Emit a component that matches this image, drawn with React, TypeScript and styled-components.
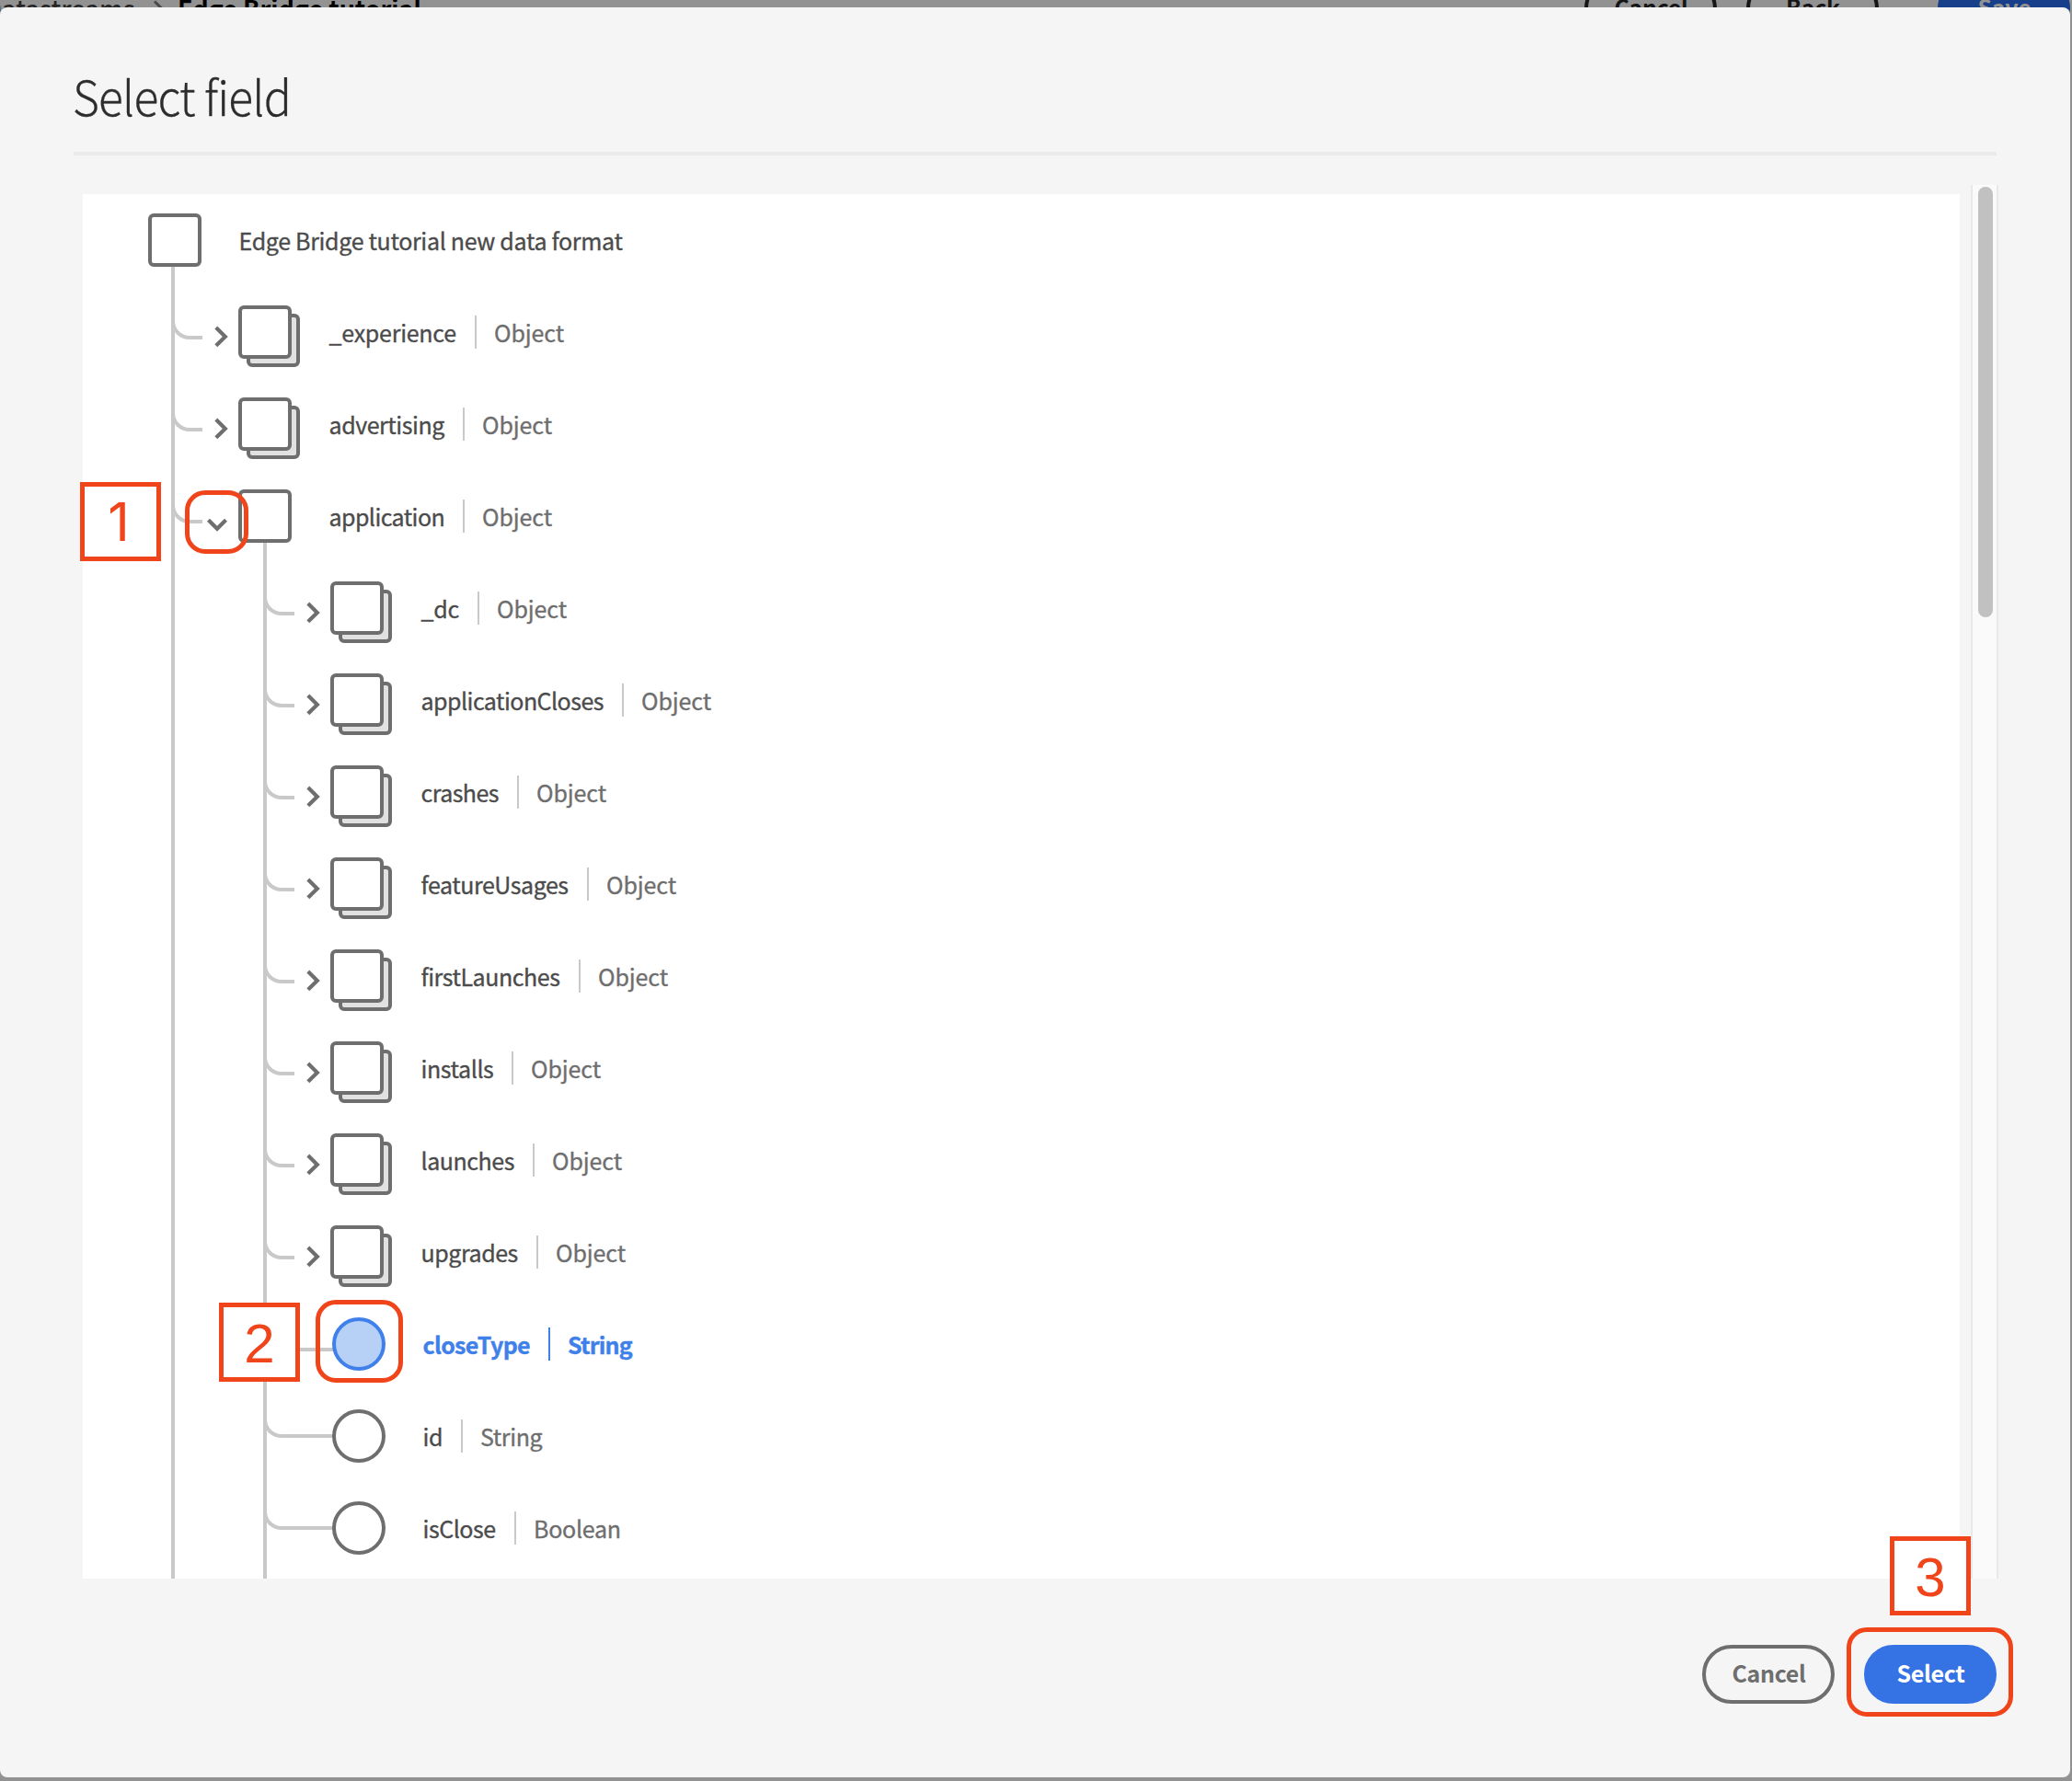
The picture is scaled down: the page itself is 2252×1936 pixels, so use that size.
import React from "react";
import styled, { createGlobalStyle, css } from "styled-components";

const GUIDE = "#c9c9c9";
const INK = "#6e6e6e";
const BLUE = "#4080ea";
const MARK = "#f0441b";

const GlobalStyle = createGlobalStyle`
  * { box-sizing: border-box; }
  body {
    margin: 0;
    overflow: hidden;
    font-family: "Noto Sans CJK JP", "Noto Sans", sans-serif;
    font-size: 25px;
    color: #4b4b4b;
  }
`;

const Page = styled.div`
  position: relative;
  width: 2252px;
  height: 1936px;
  overflow: hidden;
  background: #929292;
`;

const TopBar = styled.header`
  display: flex;
  align-items: center;
  justify-content: space-between;
  height: 64px;
  margin-top: -23px;
  padding-right: 2px;
`;

const Crumbs = styled.nav`
  display: flex;
  align-items: center;
  margin-left: -17px;
  font-size: 27px;
  line-height: 40px;
  color: #222;
`;

const Crumb = styled.span<{ $current?: boolean }>`
  font-weight: ${(p) => (p.$current ? 700 : 500)};
  color: ${(p) => (p.$current ? "#000" : "#262626")};
  letter-spacing: ${(p) => (p.$current ? 0 : 0.15)}px;
  width: ${(p) => (p.$current ? "auto" : "181px")};
`;

const CrumbArrow = styled.svg`
  width: 28px;
  height: 24px;
  margin-right: 1px;
`;

const TopActions = styled.div`
  display: flex;
  gap: 32px;
`;

const Button = styled.button<{ $tone: "outline" | "accent" | "dimOutline" | "dimAccent" }>`
  width: 144px;
  height: 64px;
  padding: 0 0 4px 1px;
  border-radius: 32px;
  border: 4px solid ${INK};
  background: transparent;
  color: ${INK};
  font: 700 25px/36px "Noto Sans CJK JP", sans-serif;
  letter-spacing: -0.3px;
  ${(p) =>
    p.$tone === "accent" &&
    css`
      border-color: #3573e5;
      background: #3573e5;
      color: #fff;
    `}
  ${(p) =>
    p.$tone === "dimOutline" &&
    css`
      border-color: #161616;
      color: #161616;
    `}
  ${(p) =>
    p.$tone === "dimAccent" &&
    css`
      margin-left: 32px;
      border-color: #173f8a;
      background: #173f8a;
      color: #929292;
    `}
`;

const Dialog = styled.section`
  position: absolute;
  top: 8px;
  left: 0;
  width: 2250px;
  height: 1924px;
  padding: 64px 78px 0 80px;
  border-radius: 8px;
  background: #f5f5f5;
`;

const Title = styled.h1`
  margin: 0 0 0 -1px;
  font-size: 52px;
  font-weight: 300;
  line-height: 64px;
  letter-spacing: -0.8px;
  color: #2c2c2c;
  -webkit-text-stroke: 0.3px;
  width: max-content;
  transform: scaleX(0.957);
  transform-origin: left;
`;

const Divider = styled.hr`
  width: 2090px;
  height: 4px;
  margin: 29px 0 32px;
  border: 0;
  background: #eaeaea;
`;

const Body = styled.div`
  display: flex;
  height: 1515px;
`;

const Panel = styled.div`
  flex: 1;
  margin: 10px 12px 0 10px;
  padding-left: 71px;
  overflow: hidden;
  background: #fff;
`;

const ScrollTrack = styled.div`
  width: 30px;
  padding: 2px 0 0 6px;
  border: solid #e8e8e8;
  border-width: 0 2px;
  background: #fafafa;
`;

const ScrollThumb = styled.div`
  width: 16px;
  height: 468px;
  border-radius: 8px;
  background: #c1c1c1;
`;

const Footer = styled.footer`
  display: flex;
  justify-content: flex-end;
  gap: 32px;
  margin-top: 72px;
  padding-right: 2px;
`;

const Branches = styled.div<{ $root?: boolean }>`
  margin-left: ${(p) => (p.$root ? 25 : 96)}px;
  padding-bottom: ${(p) => (p.$root ? 0 : 60)}px;
  border-left: 4px solid ${GUIDE};
`;

const Row = styled.div<{ $root?: boolean }>`
  display: flex;
  height: ${(p) => (p.$root ? 79 : 100)}px;
  padding-top: ${(p) => (p.$root ? 21 : 42)}px;
`;

const Elbow = styled.span<{ $leaf?: boolean; $raised?: boolean }>`
  flex: none;
  width: ${(p) => (p.$leaf ? 76 : 34)}px;
  height: 24px;
  margin: ${(p) => (p.$raised ? 7 : 13)}px ${(p) => (p.$leaf ? -1 : 0)}px 0 -4px;
  border: solid ${GUIDE};
  border-width: 0 0 4px 4px;
  border-bottom-left-radius: 20px;
`;

const Arrow = styled.svg`
  flex: none;
  width: 39px;
  height: 58px;
  fill: none;
  stroke: ${INK};
  stroke-width: 4.2;
`;

const IconCell = styled.span`
  position: relative;
  flex: none;
  width: 98px;
  height: 58px;
`;

const Square = styled.span<{ $behind?: boolean }>`
  position: absolute;
  top: ${(p) => (p.$behind ? 9 : 0)}px;
  left: ${(p) => (p.$behind ? 9 : 0)}px;
  width: 58px;
  height: 58px;
  border: 4px solid ${INK};
  border-radius: 6px;
  background: ${(p) => (p.$behind ? "#e1e1e1" : "#fff")};
`;

const Circle = styled.span<{ $on?: boolean }>`
  display: block;
  width: 58px;
  height: 58px;
  border: 4px solid ${(p) => (p.$on ? BLUE : INK)};
  border-radius: 50%;
  background: ${(p) => (p.$on ? "#b7d0f6" : "#fff")};
`;

const Caption = styled.span<{ $on?: boolean }>`
  display: flex;
  height: 36px;
  margin-top: 11px;
  line-height: 36px;
  white-space: nowrap;
  -webkit-text-stroke: 0.35px;
  ${(p) =>
    p.$on &&
    css`
      font-weight: 700;
      color: ${BLUE};
    `}
`;

const Name = styled.span<{ $width?: number; $track: number }>`
  width: ${(p) => (p.$width ? `${p.$width}px` : "auto")};
  margin-right: 20px;
  padding-left: 0.5px;
  letter-spacing: ${(p) => p.$track}px;
`;

const Kind = styled.span<{ $on?: boolean; $track: number }>`
  padding-left: 19px;
  border-left: 2px solid ${(p) => (p.$on ? BLUE : GUIDE)};
  color: ${(p) => (p.$on ? BLUE : INK)};
  letter-spacing: ${(p) => p.$track}px;
`;

const StepBox = styled.div<{ $x: number; $y: number; $narrow?: boolean }>`
  position: absolute;
  left: ${(p) => p.$x}px;
  top: ${(p) => p.$y}px;
  width: 88px;
  height: 86px;
  padding: ${(p) => (p.$narrow ? "0 4px 0 0" : "2px 0 0")};
  border: 5px solid ${MARK};
  background: #fff;
  color: ${MARK};
  font: 60px/76px "Liberation Sans", Arial, sans-serif;
  text-align: center;
  ${(p) =>
    p.$narrow &&
    css`
      font-family: Inter, sans-serif;
      font-size: 58px;
    `}
`;

const Ring = styled.div<{ $x: number; $y: number; $w: number; $h: number }>`
  position: absolute;
  left: ${(p) => p.$x}px;
  top: ${(p) => p.$y}px;
  width: ${(p) => p.$w}px;
  height: ${(p) => p.$h}px;
  border: 5px solid ${MARK};
  border-radius: 22px;
`;

type Field = {
  name: string;
  kind: string;
  width: number;
  track: number;
  leaf?: boolean;
  selected?: boolean;
  children?: Field[];
};

const kindTrack: Record<string, number> = { Object: -0.1, String: -0.4, Boolean: -0.25 };

const object = (name: string, width: number, track: number, children?: Field[]): Field => ({
  name,
  kind: "Object",
  width,
  track,
  children,
});

const fields: Field[] = [
  object("_experience", 139, -0.25),
  object("advertising", 126, -0.45),
  object("application", 126, -0.57, [
    object("_dc", 42, -0.2),
    object("applicationCloses", 199, -0.53),
    object("crashes", 85, -0.55),
    object("featureUsages", 161, -0.44),
    object("firstLaunches", 152, -0.44),
    object("installs", 79, -0.4),
    object("launches", 102, -0.45),
    object("upgrades", 106, -0.45),
    { name: "closeType", kind: "String", width: 117, track: -0.68, leaf: true, selected: true },
    { name: "id", kind: "String", width: 22, track: -0.5, leaf: true },
    { name: "isClose", kind: "Boolean", width: 80, track: -0.45, leaf: true },
  ]),
];

function FieldNode({ field }: { field: Field }) {
  const { name, kind, width, track, leaf, selected, children } = field;
  return (
    <>
      <Row>
        <Elbow $leaf={leaf} $raised={leaf && !selected} />
        {!leaf && (
          <Arrow viewBox="0 42 39 58">
            <path d={children ? "M6.5 75.2 16 84.8 25.5 75.2" : "M14.8 66 24.8 75.9 14.8 85.8"} />
          </Arrow>
        )}
        <IconCell>
          {leaf ? (
            <Circle $on={selected} />
          ) : (
            <>
              {!children && <Square $behind />}
              <Square />
            </>
          )}
        </IconCell>
        <Caption $on={selected}>
          <Name $width={width} $track={track}>
            {name}
          </Name>
          <Kind $on={selected} $track={selected ? -0.85 : kindTrack[kind]}>
            {kind}
          </Kind>
        </Caption>
      </Row>
      {children && (
        <Branches>
          {children.map((c) => (
            <FieldNode key={c.name} field={c} />
          ))}
        </Branches>
      )}
    </>
  );
}

export default function App() {
  return (
    <Page>
      <GlobalStyle />
      <TopBar>
        <Crumbs>
          <Crumb>Datastreams</Crumb>
          <CrumbArrow viewBox="0 0 28 24" fill="none" stroke="#4a4a4a" strokeWidth="3">
            <path d="M4 4.5 12 12.5 4 20.5" />
          </CrumbArrow>
          <Crumb $current>Edge Bridge tutorial</Crumb>
        </Crumbs>
        <TopActions>
          <Button $tone="dimOutline">Cancel</Button>
          <Button $tone="dimOutline">Back</Button>
          <Button $tone="dimAccent">Save</Button>
        </TopActions>
      </TopBar>

      <Dialog>
        <Title>Select field</Title>
        <Divider />
        <Body>
          <Panel>
            <Row $root>
              <IconCell>
                <Square />
              </IconCell>
              <Caption>
                <Name $track={-0.32}>Edge Bridge tutorial new data format</Name>
              </Caption>
            </Row>
            <Branches $root>
              {fields.map((f) => (
                <FieldNode key={f.name} field={f} />
              ))}
            </Branches>
          </Panel>
          <ScrollTrack>
            <ScrollThumb />
          </ScrollTrack>
        </Body>
        <Footer>
          <Button $tone="outline">Cancel</Button>
          <Button $tone="accent">Select</Button>
        </Footer>
      </Dialog>

      <StepBox $x={87} $y={524} $narrow>1</StepBox>
      <Ring $x={200.5} $y={533} $w={69} $h={69} />
      <StepBox $x={238} $y={1416}>2</StepBox>
      <Ring $x={342.5} $y={1413} $w={95} $h={90} />
      <StepBox $x={2054} $y={1670}>3</StepBox>
      <Ring $x={2007} $y={1769} $w={181} $h={97} />
    </Page>
  );
}
